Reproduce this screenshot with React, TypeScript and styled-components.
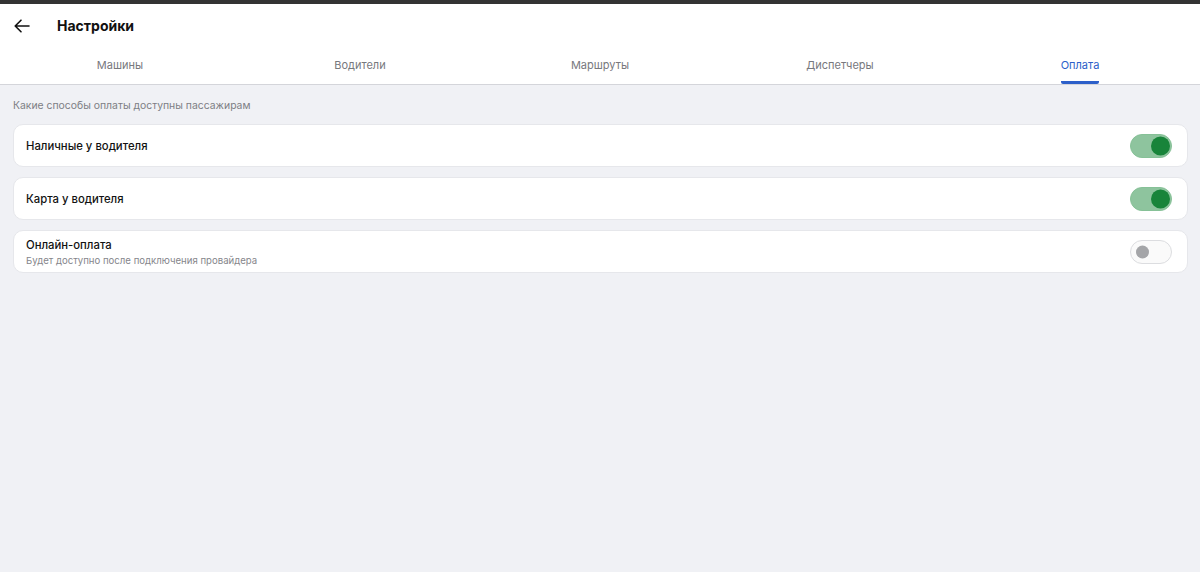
import * as React from "react";
import styled, { createGlobalStyle } from "styled-components";

const GlobalStyle = createGlobalStyle`
  html, body {
    margin: 0;
    padding: 0;
    background: #f0f1f5;
    font-family: Inter, "Noto Sans", "Liberation Sans", sans-serif;
    color: #111;
  }
  * { box-sizing: border-box; }
`;

const Page = styled.div`
  min-height: 572px;
  border-top: 4px solid #333;
  background: #f0f1f5;
`;

const Header = styled.header`
  background: #fff;
  border-bottom: 1px solid #d4d5da;
`;

const TitleRow = styled.div`
  display: flex;
  align-items: center;
  height: 43px;
  padding: 0 14px;
  gap: 27px;
`;

const BackButton = styled.button`
  display: flex;
  align-items: center;
  justify-content: center;
  width: 16px;
  height: 16px;
  padding: 0;
  border: none;
  background: none;
  cursor: pointer;
  color: #111;
`;

const Title = styled.h1`
  margin: 0;
  font-size: 14px;
  font-weight: 700;
`;

const Tabs = styled.nav`
  display: grid;
  grid-template-columns: repeat(5, 1fr);
  height: 37px;
`;

const Tab = styled.div`
  display: flex;
  justify-content: center;
  align-items: stretch;
`;

const TabLabel = styled.span<{ $active?: boolean }>`
  display: flex;
  align-items: center;
  padding-top: 1px;
  font-size: 11px;
  color: ${(p) => (p.$active ? "#2c5fc9" : "#77787d")};
  border-bottom: 3px solid ${(p) => (p.$active ? "#2c5fc9" : "transparent")};
  border-radius: 2px;
  cursor: pointer;
`;

const Content = styled.main`
  padding: 14px 12px 0 13px;
  display: flex;
  flex-direction: column;
  gap: 10px;
`;

const Hint = styled.p`
  margin: 0 0 2px;
  font-size: 10.4px;
  color: #7d7e84;
`;

const Card = styled.div`
  display: flex;
  align-items: center;
  justify-content: space-between;
  height: 43px;
  padding: 0 15px 0 12px;
  background: #fff;
  border: 1px solid #e6e7eb;
  border-radius: 10px;
`;

const Labels = styled.div`
  display: flex;
  flex-direction: column;
  gap: 3px;
`;

const Label = styled.span`
  font-size: 11.3px;
  font-weight: 500;
  color: #121212;
`;

const Note = styled.span`
  font-size: 9.6px;
  color: #85868b;
`;

const Track = styled.button<{ $on: boolean }>`
  position: relative;
  width: 42px;
  height: 24px;
  padding: 0;
  border-radius: 12px;
  cursor: pointer;
  border: 1.5px solid ${(p) => (p.$on ? "#86c197" : "#dcdde0")};
  background: ${(p) => (p.$on ? "#8ec49e" : "#fafafa")};
`;

const Knob = styled.span<{ $on: boolean }>`
  position: absolute;
  top: 50%;
  transform: translateY(-50%);
  border-radius: 50%;
  ${(p) =>
    p.$on
      ? `right: 1.5px; width: 19px; height: 19px; background: #18843a;`
      : `left: 5px; width: 13px; height: 13px; background: #a4a5a8;`}
`;

type Method = { title: string; note?: string; enabled: boolean };

const methods: Method[] = [
  { title: "Наличные у водителя", enabled: true },
  { title: "Карта у водителя", enabled: true },
  {
    title: "Онлайн-оплата",
    note: "Будет доступно после подключения провайдера",
    enabled: false,
  },
];

const tabs = ["Машины", "Водители", "Маршруты", "Диспетчеры", "Оплата"];

const Toggle: React.FC<{ on: boolean; onChange: () => void }> = ({ on, onChange }) => (
  <Track $on={on} onClick={onChange} role="switch" aria-checked={on}>
    <Knob $on={on} />
  </Track>
);

const App: React.FC = () => {
  const [items, setItems] = React.useState(methods);

  // online payment stays locked until a provider is connected
  const flip = (i: number) =>
    setItems((list) =>
      list.map((m, idx) => (idx === i && m.note === undefined ? { ...m, enabled: !m.enabled } : m))
    );

  return (
    <Page>
      <GlobalStyle />
      <Header>
        <TitleRow>
          <BackButton aria-label="Назад">
            <svg width="16" height="14" viewBox="0 0 16 14" fill="none">
              <path
                d="M15 7H1.5M7 1.2 1.2 7 7 12.8"
                stroke="currentColor"
                strokeWidth="1.6"
                strokeLinecap="round"
                strokeLinejoin="round"
              />
            </svg>
          </BackButton>
          <Title>Настройки</Title>
        </TitleRow>
        <Tabs>
          {tabs.map((t, i) => (
            <Tab key={t}>
              <TabLabel $active={i === tabs.length - 1}>{t}</TabLabel>
            </Tab>
          ))}
        </Tabs>
      </Header>
      <Content>
        <Hint>Какие способы оплаты доступны пассажирам</Hint>
        {items.map((m, i) => (
          <Card key={m.title}>
            <Labels>
              <Label>{m.title}</Label>
              {m.note && <Note>{m.note}</Note>}
            </Labels>
            <Toggle on={m.enabled} onChange={() => flip(i)} />
          </Card>
        ))}
      </Content>
    </Page>
  );
};

export default App;
